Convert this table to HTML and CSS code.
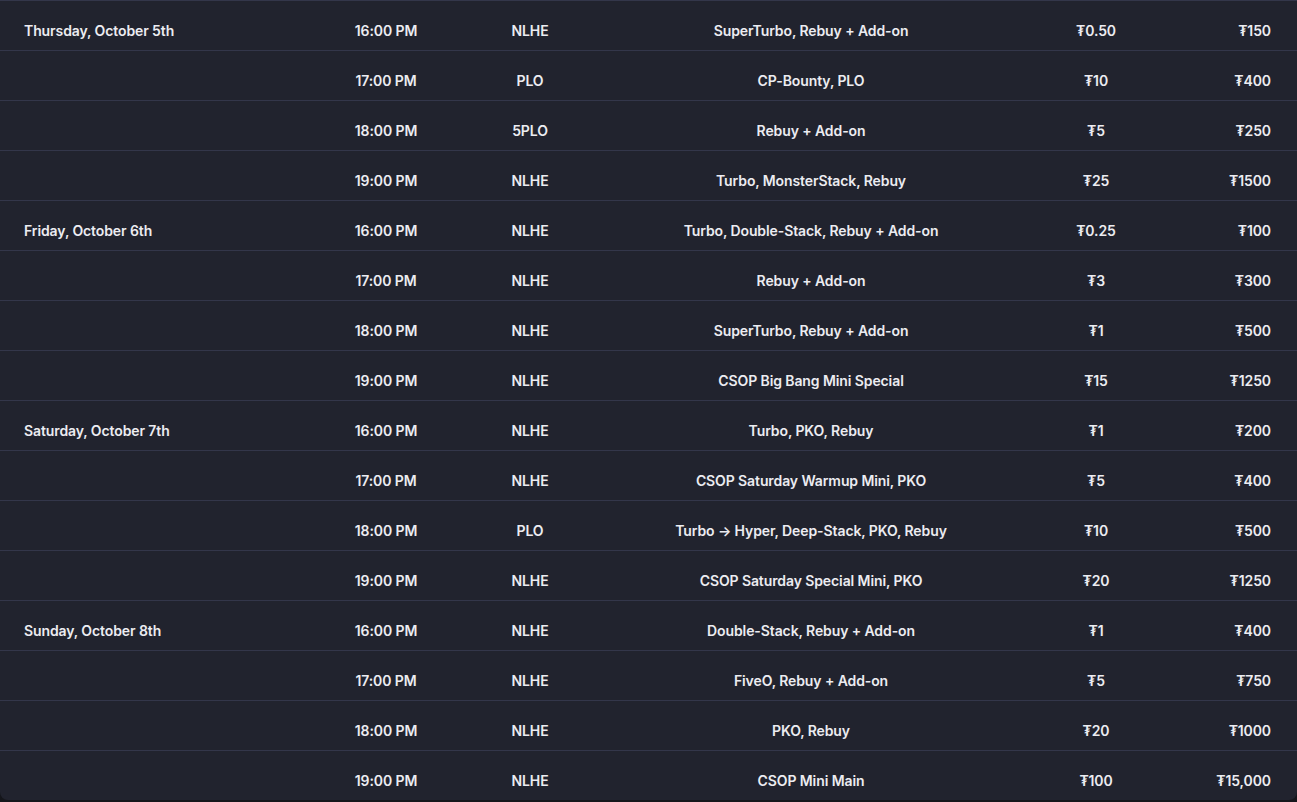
FILE: index.html
```html
<!DOCTYPE html>
<html lang="en">
<head>
<meta charset="utf-8">
<title>Schedule</title>
<link rel="stylesheet" href="styles.css">
</head>
<body>
<div class="schedule">
  <div class="row"><div class="c date">Thursday, October 5th</div><div class="c time">16:00 PM</div><div class="c game">NLHE</div><div class="c desc">SuperTurbo, Rebuy + Add-on</div><div class="c buy">₮0.50</div><div class="c prize">₮150</div></div>
  <div class="row"><div class="c date"></div><div class="c time">17:00 PM</div><div class="c game">PLO</div><div class="c desc">CP-Bounty, PLO</div><div class="c buy">₮10</div><div class="c prize">₮400</div></div>
  <div class="row"><div class="c date"></div><div class="c time">18:00 PM</div><div class="c game">5PLO</div><div class="c desc">Rebuy + Add-on</div><div class="c buy">₮5</div><div class="c prize">₮250</div></div>
  <div class="row"><div class="c date"></div><div class="c time">19:00 PM</div><div class="c game">NLHE</div><div class="c desc">Turbo, MonsterStack, Rebuy</div><div class="c buy">₮25</div><div class="c prize">₮1500</div></div>
  <div class="row"><div class="c date">Friday, October 6th</div><div class="c time">16:00 PM</div><div class="c game">NLHE</div><div class="c desc">Turbo, Double-Stack, Rebuy + Add-on</div><div class="c buy">₮0.25</div><div class="c prize">₮100</div></div>
  <div class="row"><div class="c date"></div><div class="c time">17:00 PM</div><div class="c game">NLHE</div><div class="c desc">Rebuy + Add-on</div><div class="c buy">₮3</div><div class="c prize">₮300</div></div>
  <div class="row"><div class="c date"></div><div class="c time">18:00 PM</div><div class="c game">NLHE</div><div class="c desc">SuperTurbo, Rebuy + Add-on</div><div class="c buy">₮1</div><div class="c prize">₮500</div></div>
  <div class="row"><div class="c date"></div><div class="c time">19:00 PM</div><div class="c game">NLHE</div><div class="c desc">CSOP Big Bang Mini Special</div><div class="c buy">₮15</div><div class="c prize">₮1250</div></div>
  <div class="row"><div class="c date">Saturday, October 7th</div><div class="c time">16:00 PM</div><div class="c game">NLHE</div><div class="c desc">Turbo, PKO, Rebuy</div><div class="c buy">₮1</div><div class="c prize">₮200</div></div>
  <div class="row"><div class="c date"></div><div class="c time">17:00 PM</div><div class="c game">NLHE</div><div class="c desc">CSOP Saturday Warmup Mini, PKO</div><div class="c buy">₮5</div><div class="c prize">₮400</div></div>
  <div class="row"><div class="c date"></div><div class="c time">18:00 PM</div><div class="c game">PLO</div><div class="c desc">Turbo → Hyper, Deep-Stack, PKO, Rebuy</div><div class="c buy">₮10</div><div class="c prize">₮500</div></div>
  <div class="row"><div class="c date"></div><div class="c time">19:00 PM</div><div class="c game">NLHE</div><div class="c desc">CSOP Saturday Special Mini, PKO</div><div class="c buy">₮20</div><div class="c prize">₮1250</div></div>
  <div class="row"><div class="c date">Sunday, October 8th</div><div class="c time">16:00 PM</div><div class="c game">NLHE</div><div class="c desc">Double-Stack, Rebuy + Add-on</div><div class="c buy">₮1</div><div class="c prize">₮400</div></div>
  <div class="row"><div class="c date"></div><div class="c time">17:00 PM</div><div class="c game">NLHE</div><div class="c desc">FiveO, Rebuy + Add-on</div><div class="c buy">₮5</div><div class="c prize">₮750</div></div>
  <div class="row"><div class="c date"></div><div class="c time">18:00 PM</div><div class="c game">NLHE</div><div class="c desc">PKO, Rebuy</div><div class="c buy">₮20</div><div class="c prize">₮1000</div></div>
  <div class="row"><div class="c date"></div><div class="c time">19:00 PM</div><div class="c game">NLHE</div><div class="c desc">CSOP Mini Main</div><div class="c buy">₮100</div><div class="c prize">₮15,000</div></div>
</div>
</body>
</html>
```

FILE: styles.css
```css
html, body {
  margin: 0;
  padding: 0;
  background: #15161b;
}
body {
  font-family: Inter, "Noto Sans", "DejaVu Sans", sans-serif;
  font-size: 14px;
  font-weight: 600;
  letter-spacing: -0.1px;
  color: #ececf1;
  height: 802px;
  overflow: hidden;
}
.schedule {
  width: 1297px;
  background: #21232e;
  border-radius: 0 0 8px 8px;
  overflow: hidden;
}
.row {
  display: grid;
  grid-template-columns: 306px 160px 128px 434px 136px 133px;
  border-top: 1px solid #33364a;
  height: 49px;
}
.c {
  padding-top: 20px;
  line-height: 20px;
  white-space: nowrap;
  text-align: center;
}
.date {
  text-align: left;
  padding-left: 24px;
}
.prize {
  text-align: right;
  padding-right: 26px;
}
```
